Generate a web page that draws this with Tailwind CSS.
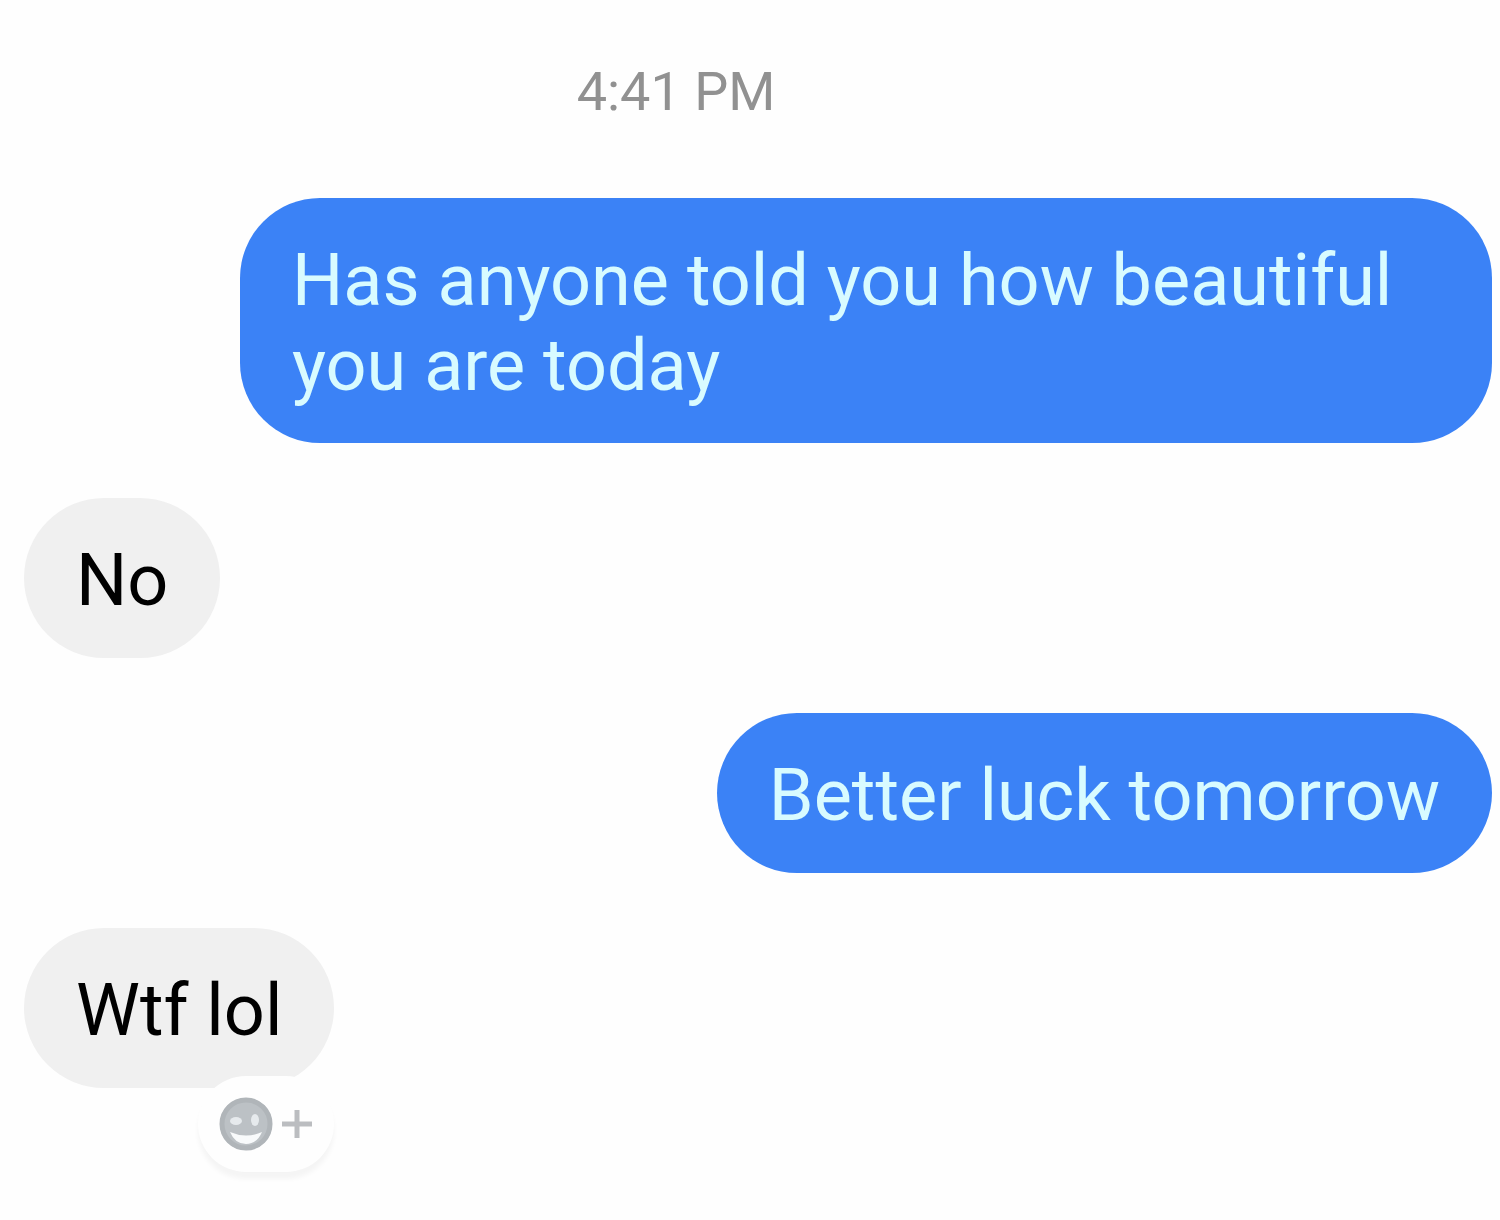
<!DOCTYPE html>
<html lang="en">
  <head>
    <meta charset="UTF-8" />
    <meta name="viewport" content="width=device-width, initial-scale=1.0" />
    <title>Messages</title>
    <script src="https://cdn.jsdelivr.net/npm/@tailwindcss/browser@4"></script>
  </head>
  <body class="bg-[#fefefe] font-['Roboto',sans-serif] antialiased">
    <main class="flex min-h-screen flex-col gap-[55px] pt-16 pb-8 pl-6 pr-2 text-[72px] leading-[85px]">
      <time class="self-center mr-[164px] mb-[23px] text-[54px] leading-[56px] text-[#919191]">4:41 PM</time>

      <p class="self-end max-w-[1252px] rounded-[80px] bg-[#3b82f6] px-[52px] pt-10 pb-[35px] text-[#d8fbff]">
        Has anyone told you how beautiful you are today
      </p>

      <p class="self-start rounded-[80px] bg-[#f0f0f0] px-[52px] pt-10 pb-[35px] text-black">
        No
      </p>

      <p class="self-end rounded-[80px] bg-[#3b82f6] px-[52px] pt-10 pb-[35px] text-[#d8fbff]">
        Better luck tomorrow
      </p>

      <div class="flex flex-col items-end self-start">
        <p class="rounded-[80px] bg-[#f0f0f0] px-[52px] pt-10 pb-[35px] text-black">
          Wtf lol
        </p>
        <!-- Add reaction -->
        <button
          type="button"
          aria-label="Add reaction"
          class="-mt-3 flex h-24 w-[136px] items-center justify-center gap-2 rounded-full bg-[#fefefe] shadow-[0_7px_5px_rgba(0,0,0,0.04)]"
        >
          <svg class="size-[54px]" viewBox="0 0 54 54" fill="none">
            <circle cx="27" cy="27" r="26" fill="#bcc1c5" />
            <circle cx="27" cy="27" r="24" stroke="#b0b5b9" stroke-width="5" />
            <ellipse cx="17" cy="24" rx="6" ry="4" fill="#e6eaed" />
            <ellipse cx="36" cy="23" rx="4" ry="6" fill="#e6eaed" />
            <path d="M11 35 Q27 42 43 35 Q38 47 27 47 Q16 47 11 35 Z" fill="#f8fafb" />
          </svg>
          <svg class="size-8" viewBox="0 0 32 32" fill="none">
            <path d="M16 2 V30 M1 16 H31" stroke="#bbbdc0" stroke-width="5" />
          </svg>
        </button>
      </div>
    </main>
  </body>
</html>
